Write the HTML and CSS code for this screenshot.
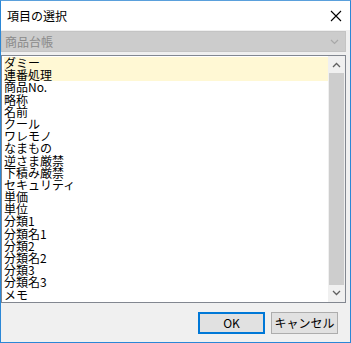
FILE: index.html
```html
<!DOCTYPE html>
<html lang="ja">
<head>
    <meta charset="UTF-8">
    <title>項目の選択</title>
    <link rel="stylesheet" href="styles.css">
</head>
<body>
    <div class="dialog">
        <div class="titlebar">
            <span class="title">項目の選択</span>
            <svg class="close" width="12" height="12" viewBox="0 0 12 12">
                <path d="M1 1L11 11M11 1L1 11" stroke="#000" stroke-width="1.1" fill="none"/>
            </svg>
        </div>
        <div class="combo">
            <span>商品台帳</span>
            <svg class="chev" width="9" height="6" viewBox="0 0 9 6">
                <path d="M1 1L4.5 4.5L8 1" stroke="#a8a8a8" stroke-width="1.2" fill="none"/>
            </svg>
        </div>
        <div class="list">
            <ul class="items">
                <li class="sel">ダミー</li>
                <li class="sel">連番処理</li>
                <li>商品No.</li>
                <li>略称</li>
                <li>名前</li>
                <li>クール</li>
                <li>ワレモノ</li>
                <li>なまもの</li>
                <li>逆さま厳禁</li>
                <li>下積み厳禁</li>
                <li>セキュリティ</li>
                <li>単価</li>
                <li>単位</li>
                <li>分類1</li>
                <li>分類名1</li>
                <li>分類2</li>
                <li>分類名2</li>
                <li>分類3</li>
                <li>分類名3</li>
                <li>メモ</li>
            </ul>
            <div class="scroll">
                <svg width="9" height="6" viewBox="0 0 9 6">
                    <path d="M1 5L4.5 1.5L8 5" stroke="#606060" stroke-width="1.3" fill="none"/>
                </svg>
                <div class="thumb"></div>
                <svg width="9" height="6" viewBox="0 0 9 6">
                    <path d="M1 1L4.5 4.5L8 1" stroke="#606060" stroke-width="1.3" fill="none"/>
                </svg>
            </div>
        </div>
        <div class="footer">
            <button class="btn ok">OK</button>
            <button class="btn">キャンセル</button>
        </div>
    </div>
</body>
</html>
```

FILE: styles.css
```css
*{
    padding: 0;
    margin: 0;
    box-sizing: border-box;
}
body{
    width: 351px;
    height: 343px;
    overflow: hidden;
    font-family: "Noto Sans CJK JP", "Liberation Sans", sans-serif;
    font-size: 12px;
    color: #000;
}
.dialog{
    width: 351px;
    height: 343px;
    border: 1px solid #2b87d6;
    border-top-color: #5aa0dc;
    background-color: #f0f0f0;
    display: flex;
    flex-direction: column;
}
.titlebar{
    height: 29px;
    background-color: #fff;
    display: flex;
    align-items: center;
    justify-content: space-between;
    padding: 0 8px 0 6px;
}
.title{
    font-size: 12px;
    line-height: 14px;
}
.combo{
    height: 21px;
    margin: 1px 4px 0 0;
    background-color: #cccccc;
    border: 1px solid #c4c4c4;
    display: flex;
    align-items: center;
    justify-content: space-between;
    padding: 0 6px 0 3px;
    color: #8a8a8a;
}
.list{
    height: 248px;
    margin: 3px 4px 0 0;
    border: 1px solid #828790;
    background-color: #fff;
    display: flex;
}
.items{
    list-style: none;
    flex: 1;
    padding: 1px 0 0 2px;
}
.items li{
    height: 12.2px;
    line-height: 12.2px;
    white-space: nowrap;
}
.items li.sel{
    background-color: #fff8d4;
}
.scroll{
    width: 17px;
    background-color: #f0f0f0;
    display: flex;
    flex-direction: column;
    align-items: center;
    justify-content: space-between;
    padding: 6px 0 6px;
}
.thumb{
    flex: 1;
    width: 15px;
    margin: 5px 0;
    background-color: #cdcdcd;
}
.footer{
    flex: 1;
    display: flex;
    justify-content: flex-end;
    align-items: center;
    gap: 6px;
    padding: 0 12px 0 0;
}
.btn{
    width: 67px;
    height: 22px;
    background-color: #e1e1e1;
    border: 1px solid #adadad;
    font-family: "Noto Sans CJK JP", "Liberation Sans", sans-serif;
    font-size: 12px;
    color: #000;
}
.btn.ok{
    border: 2px solid #0078d7;
}
```
